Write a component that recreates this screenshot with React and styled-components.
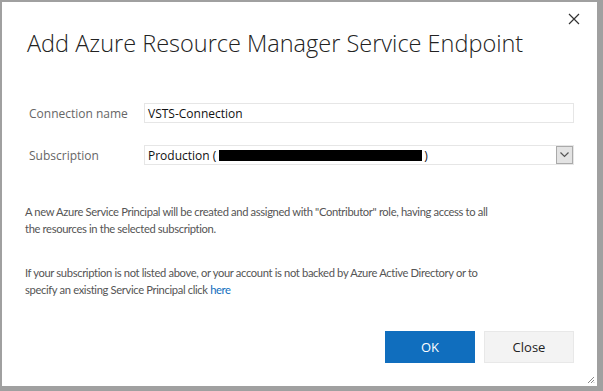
import React from 'react'
import styled, { createGlobalStyle } from 'styled-components'

const Global = createGlobalStyle`
  html, body {
    margin: 0;
    padding: 0;
    background: #a9a9a9;
  }
  body {
    font-family: "Segoe UI", "Open Sans", sans-serif;
  }
`

const Frame = styled.div`
  width: 603px;
  height: 391px;
  box-sizing: border-box;
  padding: 2px 6px 5px 2px;
  background: #a0a0a0;
`

const Dialog = styled.div`
  position: relative;
  height: 100%;
  background: #fff;
  box-sizing: border-box;
  padding: 22px 23px 0 25px;
  display: flex;
  flex-direction: column;
`

const CloseX = styled.button`
  position: absolute;
  top: 10px;
  right: 16px;
  width: 14px;
  height: 14px;
  padding: 0;
  border: none;
  background: none;
`

const Title = styled.h1`
  margin: 0;
  font-family: "Open Sans", sans-serif;
  font-weight: 300;
  font-size: 23.5px;
  color: #222;
  line-height: 38px;
`

const Form = styled.div`
  margin-top: 41px;
  display: grid;
  grid-template-columns: 117px 1fr;
  row-gap: 22px;
  align-items: center;
`

const Label = styled.label`
  font-size: 12px;
  color: #666;
  padding-left: 2px;
`

const Field = styled.div`
  height: 20px;
  box-sizing: border-box;
  border: 1px solid #e6e6e6;
  display: flex;
  align-items: center;
  padding-left: 3px;
  font-size: 12px;
  color: #111;
`

const Redacted = styled.span`
  display: inline-block;
  width: 203px;
  height: 11px;
  background: #000;
  margin: 0 2px 0 3px;
`

const Arrow = styled.span`
  margin-left: auto;
  width: 17px;
  height: 18px;
  box-sizing: border-box;
  border: 1px solid #aaa;
  background: #e3e3e3;
  display: flex;
  align-items: center;
  justify-content: center;
`

const Info = styled.p`
  margin: 0 0 0 -2px;
  font-family: "Lato", sans-serif;
  font-size: 11.2px;
  letter-spacing: -0.35px;
  line-height: 17px;
  color: #555;
  white-space: nowrap;
  & + & {
    margin-top: 27px;
  }
`

const Notes = styled.div`
  margin-top: 38px;
`

const Link = styled.a`
  color: #106ebe;
  text-decoration: none;
`

const Buttons = styled.div`
  margin-top: auto;
  margin-bottom: 23px;
  display: flex;
  justify-content: flex-end;
  gap: 9px;
`

const Button = styled.button`
  width: 90px;
  height: 32px;
  font-family: "Open Sans", sans-serif;
  font-size: 13px;
  border: 1px solid ${({ primary }) => (primary ? '#106ebe' : '#e8e8e8')};
  background: ${({ primary }) => (primary ? '#106ebe' : '#f3f3f3')};
  color: ${({ primary }) => (primary ? '#fff' : '#222')};
`

const Grip = styled.svg`
  position: absolute;
  right: 2px;
  bottom: 2px;
`

export default function App() {
  return (
    <Frame>
      <Global />
      <Dialog>
        <CloseX aria-label="Close">
          <svg width="14" height="14" viewBox="0 0 14 14">
            <path d="M2 2 L12 12 M12 2 L2 12" stroke="#333" strokeWidth="1.2" />
          </svg>
        </CloseX>
        <Title>Add Azure Resource Manager Service Endpoint</Title>
        <Form>
          <Label>Connection name</Label>
          <Field>VSTS-Connection</Field>
          <Label>Subscription</Label>
          <Field>
            Production (<Redacted />)
            <Arrow>
              <svg width="9" height="6" viewBox="0 0 9 6">
                <path d="M0.5 0.5 L4.5 4.5 L8.5 0.5" fill="none" stroke="#555" strokeWidth="1.2" />
              </svg>
            </Arrow>
          </Field>
        </Form>
        <Notes>
          <Info>
            A new Azure Service Principal will be created and assigned with "Contributor" role, having access to all
            <br />
            the resources in the selected subscription.
          </Info>
          <Info>
            If your subscription is not listed above, or your account is not backed by Azure Active Directory or to
            <br />
            specify an existing Service Principal click <Link href="#">here</Link>
          </Info>
        </Notes>
        <Buttons>
          <Button primary>OK</Button>
          <Button>Close</Button>
        </Buttons>
        <Grip width="8" height="8" viewBox="0 0 8 8">
          <path d="M7 1 L1 7 M7 4 L4 7 M7 6.5 L6.5 7" stroke="#888" strokeWidth="1" />
        </Grip>
      </Dialog>
    </Frame>
  )
}
